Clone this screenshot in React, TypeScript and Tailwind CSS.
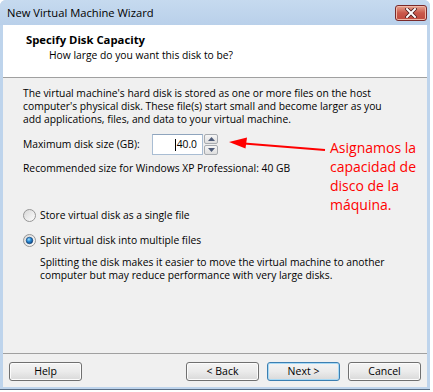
import React from "react";

const font = { fontFamily: '"Open Sans", "Noto Sans", sans-serif' };

function Radio({ checked }: { checked?: boolean }) {
  return (
    <svg width="13" height="13" viewBox="0 0 13 13" className="shrink-0">
      <defs>
        <linearGradient id={checked ? "rgc" : "rgu"} x1="0" y1="0" x2="1" y2="1">
          <stop offset="0" stopColor="#d6d6d6" />
          <stop offset="1" stopColor="#ffffff" />
        </linearGradient>
        <radialGradient id="dot" cx="0.4" cy="0.35" r="0.7">
          <stop offset="0" stopColor="#9fe0ff" />
          <stop offset="0.45" stopColor="#2a8ad4" />
          <stop offset="1" stopColor="#0b3e7a" />
        </radialGradient>
      </defs>
      <circle cx="6.5" cy="6.5" r="6" fill={`url(#${checked ? "rgc" : "rgu"})`} stroke="#959595" strokeWidth="1" />
      {checked && <circle cx="6.5" cy="6.5" r="3.3" fill="url(#dot)" stroke="#0d3a6e" strokeWidth="0.6" />}
    </svg>
  );
}

function Btn({ children, def }: { children: React.ReactNode; def?: boolean }) {
  return (
    <div
      className={
        "w-[73px] h-[19px] rounded-[3px] border flex items-center justify-center text-[10.5px] text-black bg-linear-to-b from-[#f4f4f4] via-[#ebebeb] to-[#d9d9d9] " +
        (def ? "border-[#3c7fb1] shadow-[inset_0_0_0_1px_#a7d9f5]" : "border-[#707070] shadow-[inset_0_0_0_1px_#fcfcfc]")
      }
    >
      {children}
    </div>
  );
}

export default function App() {
  return (
    <div className="relative w-[433px] h-[392px] bg-white overflow-hidden" style={font}>
      <div className="w-[430px] h-[390px] flex flex-col rounded-t-[6px] bg-[#bed4ec] border-b border-[#5a6e86]">
        {/* title bar */}
        <div className="h-[25px] flex items-start pl-[7px] pr-[3px] rounded-t-[6px] bg-linear-to-b from-[#c6daef] to-[#b9d0ea]">
          <div className="flex-1 pt-[5px] text-[11.2px] leading-[15px] text-black">New Virtual Machine Wizard</div>
          <div className="mt-[5px] w-[32px] h-[16px] rounded-[3px] border border-[#7a2a2a] bg-linear-to-b from-[#e6a28f] via-[#c9584a] to-[#bf4a3e] flex items-center justify-center shadow-[inset_0_0_0_1px_#f0b9a8]">
            <svg width="12" height="10" viewBox="0 0 12 10">
              <path d="M2 1 L10 9 M10 1 L2 9" stroke="#4a1a1a" strokeWidth="3.6" strokeLinecap="square" />
              <path d="M2 1 L10 9 M10 1 L2 9" stroke="#ffffff" strokeWidth="2" strokeLinecap="square" />
            </svg>
          </div>
        </div>
        {/* client */}
        <div className="flex-1 mx-[3px] mb-[2px] flex flex-col bg-[#f0f0f0] text-[10.3px] text-black">
          <div className="h-[53px] bg-white border-b border-[#a0a0a0] pt-[7px]">
            <div className="pl-[23px] font-bold text-[11.3px] leading-[15px]">Specify Disk Capacity</div>
            <div className="pl-[46px] mt-[2px] leading-[13px]">How large do you want this disk to be?</div>
          </div>
          <div className="flex-1 pl-[20px] pt-[9px] leading-[13px]">
            <p>
              The virtual machine's hard disk is stored as one or more files on the host
              <br />
              computer's physical disk. These file(s) start small and become larger as you
              <br />
              add applications, files, and data to your virtual machine.
            </p>
            <div className="mt-[8px] h-[21px] flex items-center">
              <div className="w-[129px]">Maximum disk size (GB):</div>
              <div className="w-[51px] h-[21px] border border-[#a9bdd3] border-t-[#8ea4bd] bg-white flex items-center justify-end pr-[5px]">
                <span className="w-px h-[12px] bg-black mr-px" />
                <span>40.0</span>
              </div>
              <div className="w-[15px] h-[21px] flex flex-col gap-px pl-px">
                <div className="flex-1 border border-[#a7abb0] rounded-[2px] bg-linear-to-b from-[#f6f6f6] to-[#dedede] flex items-center justify-center">
                  <svg width="7" height="4" viewBox="0 0 7 4"><path d="M0 4 L3.5 0 L7 4 Z" fill="#4e5b78" /></svg>
                </div>
                <div className="flex-1 border border-[#a7abb0] rounded-[2px] bg-linear-to-b from-[#f6f6f6] to-[#dedede] flex items-center justify-center">
                  <svg width="7" height="4" viewBox="0 0 7 4"><path d="M0 0 L7 0 L3.5 4 Z" fill="#4e5b78" /></svg>
                </div>
              </div>
            </div>
            <div className="mt-[7px]">Recommended size for Windows XP Professional: 40 GB</div>
            <div className="mt-[32px] h-[16px] flex items-center gap-[4px]">
              <Radio />
              <span>Store virtual disk as a single file</span>
            </div>
            <div className="mt-[9px] h-[16px] flex items-center gap-[4px]">
              <Radio checked />
              <span>Split virtual disk into multiple files</span>
            </div>
            <p className="mt-[8px] pl-[17px]">
              Splitting the disk makes it easier to move the virtual machine to another
              <br />
              computer but may reduce performance with very large disks.
            </p>
          </div>
          <div className="h-[34px] border-t border-[#a0a0a0] flex items-start pt-[8px] px-[6px]">
            <Btn>Help</Btn>
            <div className="flex-1" />
            <div className="flex gap-[8px]">
              <Btn>&lt; Back</Btn>
              <Btn def>Next &gt;</Btn>
              <Btn>Cancel</Btn>
            </div>
          </div>
        </div>
      </div>

      {/* annotation arrow */}
      <svg className="absolute left-[226px] top-[134px]" width="104" height="22" viewBox="0 0 104 22">
        <path d="M99 16 L18 9.5" stroke="#ff0000" strokeWidth="2.2" />
        <path d="M3 8 L21 3.5 L19.5 14.5 Z" fill="#ff0000" />
      </svg>
      <div className="absolute left-[330px] top-[138px] text-[14px] leading-[19px] text-[#ff0000]">
        Asignamos la
        <br />
        capacidad de
        <br />
        disco de la
        <br />
        máquina.
      </div>
    </div>
  );
}
